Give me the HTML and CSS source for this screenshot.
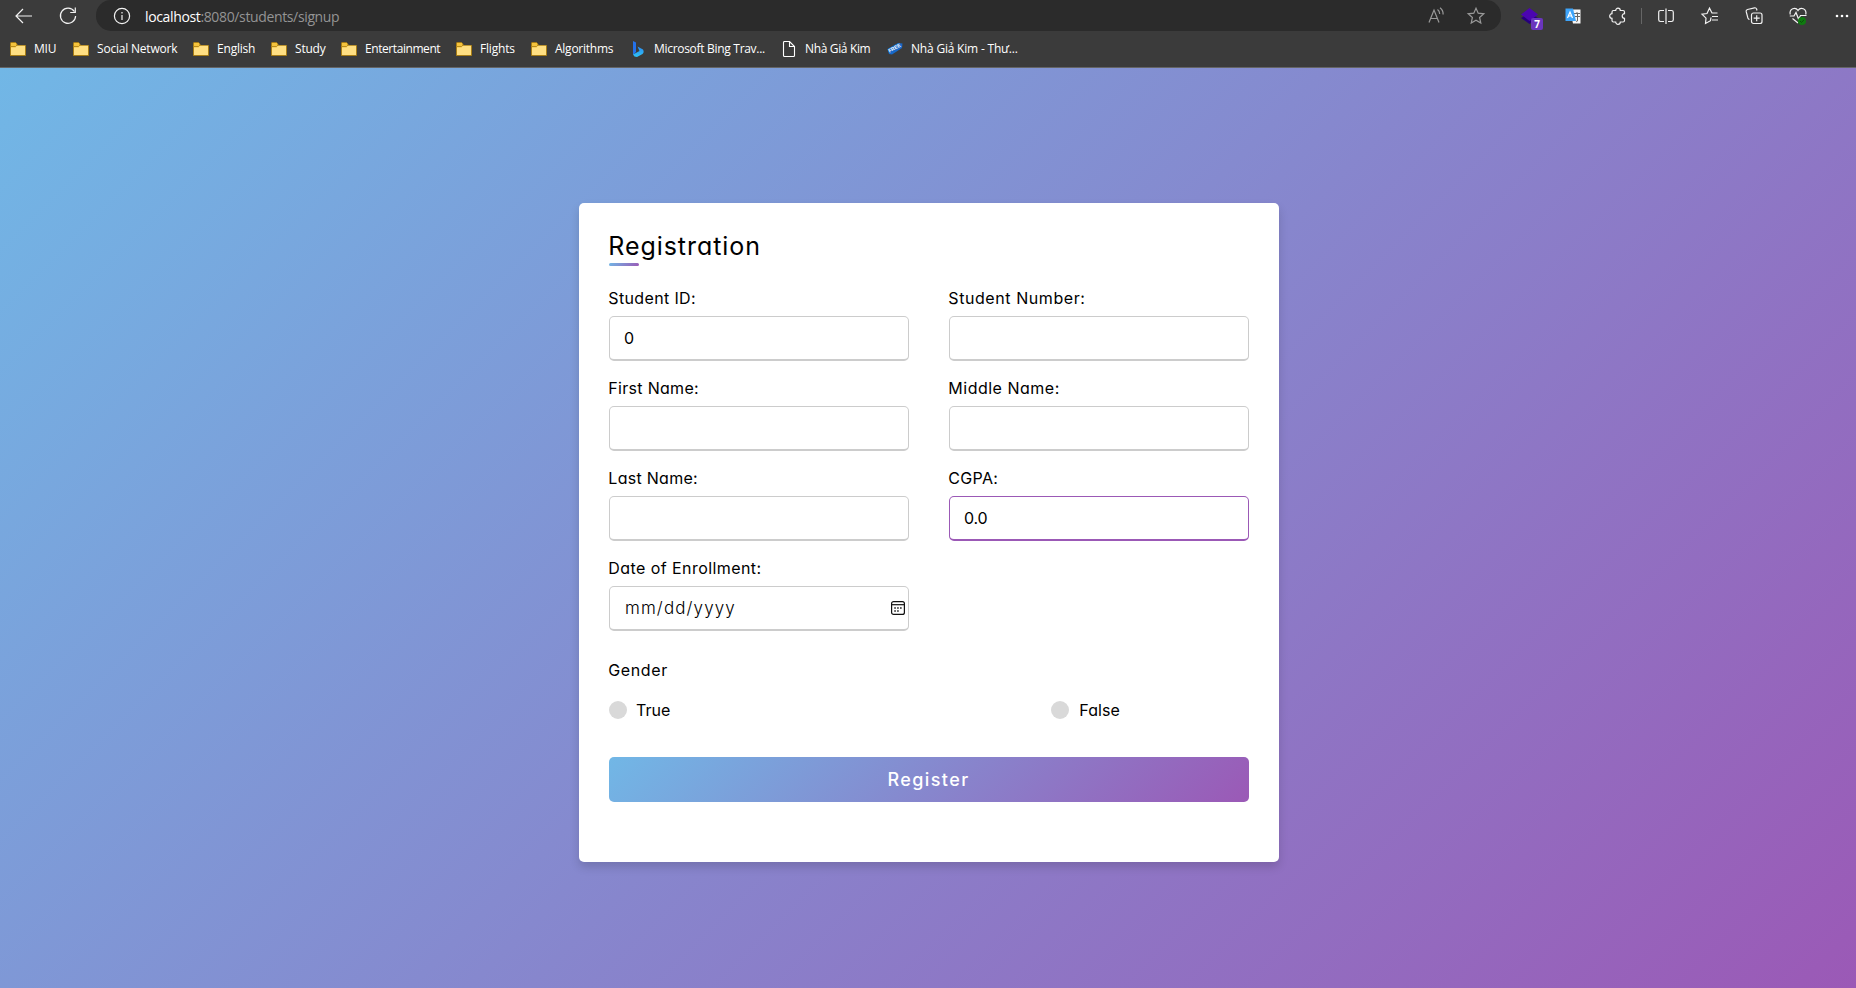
FILE: index.html
```
<!DOCTYPE html>
<html lang="en">
<head>
<meta charset="utf-8">
<title>Registration</title>
<link rel="stylesheet" href="styles.css">
</head>
<body>
<svg class="defs" width="0" height="0">
  <symbol id="folder" viewBox="0 0 16 14">
    <path d="M.5 13.500V1.200Q.5.500 1.200.500H5.500L7 2V3.500H15.500V13.500Z" fill="#f5c33c" stroke="#a77d16"/>
    <path d="M1 5.500H5.500L7 3.800H15V13H1Z" fill="#ffdf82"/>
    <path d="M.5 4.500H5.500L7 3" fill="none" stroke="#b88b1c"/>
  </symbol>
</svg>
<header class="browser">
  <div class="toolbar">
    <svg class="icon back" viewBox="0 0 18 16"><path d="M17 8H1.500M8 1 1 8l7 7"/></svg>
    <svg class="icon reload" viewBox="0 0 18 18"><path d="M15.300 4.500A7.600 7.600 0 1 0 16.600 9M16.300.500V5.500H11.200"/></svg>
    <div class="address">
      <svg class="icon info" viewBox="0 0 18 18"><circle cx="9" cy="9" r="7.600"/><path d="M9 8v5M9 5v1.500"/></svg>
      <span class="url"><b>localhost</b>:8080/students/signup</span>
      <svg class="icon read" viewBox="0 0 18 18"><path d="M1 15.500 6 3l5 12.500M2.800 11.500H9.200M9.500 2.500q2.200 1.500 2.200 4.500M12 .800q3.300 2.400 3.100 6.700"/></svg>
      <svg class="icon fav" viewBox="0 0 18 18"><path d="M9 1.300 11.200 6.200 16.800 6.800 12.600 10.500 13.800 16 9 13.200 4.200 16 5.400 10.500 1.200 6.800 6.800 6.200Z"/></svg>
    </div>
    <div class="extension">
      <svg viewBox="0 0 17 16"><path d="M0 10 8.500 5 17 10 8.500 16Z" fill="#26007c"/><path d="M0 6.500 8.500 0 17 6.500 8.500 13Z" fill="#4b05b0"/></svg>
      <span class="badge">7</span>
    </div>
    <svg class="translate" viewBox="0 0 16 16"><path d="M5 1.500H15.500V15.500H8Z" fill="#f6f6f6"/><path d="M9 5.500H15M12 4V6M10 8.500H15M12.500 6V13Q12 14 11 13" stroke="#666" fill="none"/><path d="M.5.500H8L11 13H.5Z" fill="#3da4fa"/><path d="M2.500 10 5 4 7.500 10M3.500 8H6.500" stroke="#fff" fill="none" stroke-width="1.200"/></svg>
    <svg class="icon puzzle" viewBox="0 0 18 18"><path d="M4.500 3.500H6.700A2.300 2.300 0 0 1 11.300 3.500H14Q15.500 3.500 15.500 5V6.700A2.300 2.300 0 0 0 15.500 11.300V13.500Q15.500 15 14 15H11.300A2.300 2.300 0 0 1 6.700 15H4.500Q3 15 3 13.500V11.300A2.300 2.300 0 0 1 3 6.700V5Q3 3.500 4.500 3.500Z"/></svg>
    <i class="divider"></i>
    <svg class="icon split" viewBox="0 0 16 16"><path d="M6 2.500H2.500Q.7 2.500.7 4.200V11.800Q.7 13.500 2.500 13.500H6M10 2.500h3.500q1.800 0 1.800 1.700v7.600q0 1.700-1.800 1.700H10M8 .500v15.500"/></svg>
    <svg class="icon favs" viewBox="0 0 18 18"><path d="M10 10.500 9.500 13.700 4.500 16.500 5 11.200 1 7.200 6 6.500 8.500 1.200 11 6H16.500M11 9.500H17M11 13H17"/></svg>
    <svg class="icon coll" viewBox="0 0 18 18"><rect x="6.500" y="6" width="10.500" height="10.500" rx="2"/><path d="M11.700 8.200v6M8.700 11.200h6M4.500 12.500Q3.300 12.300 2.900 11L1.200 4.700Q.800 3 2.500 2.500L9.500.800Q11 .500 11.600 2L12 3.500"/></svg>
    <div class="health">
      <svg class="icon" viewBox="0 0 18 18"><path d="M1.200 7.500C0 1.500 6.500-.500 9 3.500 11.500-.500 18 1.500 16.800 7.500M.800 9H5L7 5.500 9.500 12 11.500 8.500H17.500M3.500 11.500 9 16"/></svg>
      <svg class="ok" viewBox="0 0 8 8"><circle cx="4" cy="4" r="4" fill="#0f7b10"/><path d="M2 4 3.500 5.500 6 2.800" fill="none" stroke="#0a4f0b"/></svg>
    </div>
    <svg class="more" viewBox="0 0 14 4"><circle cx="2" cy="2" r="1.300"/><circle cx="7" cy="2" r="1.300"/><circle cx="12" cy="2" r="1.300"/></svg>
  </div>
  <nav class="bookmarks">
    <a class="bm b1"><svg class="folder"><use href="#folder"/></svg><span>MIU</span></a>
    <a class="bm b2"><svg class="folder"><use href="#folder"/></svg><span>Social Network</span></a>
    <a class="bm b3"><svg class="folder"><use href="#folder"/></svg><span>English</span></a>
    <a class="bm b4"><svg class="folder"><use href="#folder"/></svg><span>Study</span></a>
    <a class="bm b5"><svg class="folder"><use href="#folder"/></svg><span>Entertainment</span></a>
    <a class="bm b6"><svg class="folder"><use href="#folder"/></svg><span>Flights</span></a>
    <a class="bm b7"><svg class="folder"><use href="#folder"/></svg><span>Algorithms</span></a>
    <a class="bm b8"><svg class="page" viewBox="0 0 16 16"><defs><linearGradient id="bing" x1="0" y1="0" x2="0" y2="1"><stop offset="0" stop-color="#2a8bf2"/><stop offset="1" stop-color="#2fc3f5"/></linearGradient></defs><path d="M3 0 6 1.500V11L3 14Z" fill="#2471ea"/><path d="M7.500 5.500 13 8.500Q14.500 11 12.500 13L7 16Q4 16 3 13.500L9.500 10Z" fill="url(#bing)"/></svg><span>Microsoft Bing Trav...</span></a>
    <a class="bm b9"><svg class="page" viewBox="0 0 16 16"><path d="M2.500 1.500Q2.500.500 3.500.500H8.500L13.500 5.500V14.500Q13.500 15.500 12.500 15.500H3.500Q2.500 15.500 2.500 14.500ZM8.500.500V5.500H13.500" fill="none" stroke="#fff" stroke-width="1.100"/></svg><span>Nhà Giả Kim</span></a>
    <a class="bm b10"><svg class="page" viewBox="0 0 16 16"><path d="M.5 8 11 2 15.500 2.500 15 7 5 13.500 2 13Z" fill="#1769c8"/><text x="2.500" y="12" transform="rotate(-29 2 12)" class="tag">FREE</text></svg><span>Nhà Giả Kim - Thư...</span></a>
  </nav>
</header>
<main class="page-body">
  <section class="card">
    <h1 class="title">Registration</h1>
    <form>
      <div class="fields">
        <div class="field"><label class="s-id">Student ID:</label><div class="input">0</div></div>
        <div class="field"><label class="s-number">Student Number:</label><div class="input"></div></div>
        <div class="field"><label class="s-first">First Name:</label><div class="input"></div></div>
        <div class="field"><label class="s-middle">Middle Name:</label><div class="input"></div></div>
        <div class="field"><label class="s-last">Last Name:</label><div class="input"></div></div>
        <div class="field"><label class="s-cgpa">CGPA:</label><div class="input active">0.0</div></div>
        <div class="field"><label class="s-date">Date of Enrollment:</label><div class="input date"><span>mm/dd/yyyy</span><svg class="calendar" viewBox="0 0 14 14"><rect x=".6" y=".6" width="12.800" height="12.800" rx="2" fill="none" stroke="#111" stroke-width="1.200"/><path d="M1 3.700H13" stroke="#111" stroke-width="1.200"/><path d="M3.300 7H10.700M3.300 10H8" stroke="#111" stroke-width="1.500" stroke-dasharray="1.500 1.400"/></svg></div></div>
      </div>
      <div class="gender">Gender</div>
      <div class="options">
        <div class="option"><i class="dot"></i><span>True</span></div>
        <div class="option"><i class="dot"></i><span>False</span></div>
      </div>
      <div class="register">Register</div>
    </form>
  </section>
</main>
</body>
</html>
```
FILE: styles.css
```
* { box-sizing: border-box; }
body { margin: 0; height: 988px; display: flex; flex-direction: column; font-family: Inter, sans-serif; overflow: hidden; }
.defs { position: absolute; }
.browser { height: 68px; background: #3b3b3b; border-bottom: 1px solid #656565; font-family: "Open Sans", sans-serif; color: #fff; }
.toolbar { height: 32px; display: flex; align-items: center; }
.icon { flex: none; width: 18px; height: 18px; fill: none; stroke: #f2f2f2; stroke-width: 1.2; overflow: visible; }
.back { width: 18px; height: 16px; margin-left: 15px; }
.reload { margin-left: 26px; }
.address { width: 1405px; height: 31px; margin: 0 0 1px 19px; background: #2b2b2b; border-radius: 15px; display: flex; align-items: center; padding: 1px 16px 0 17px; }
.url { margin-left: 14px; font-size: 14px; letter-spacing: -.36px; color: #949494; flex: none; }
.url b { font-weight: 400; color: #fff; }
.read { margin-left: auto; stroke: #999; }
.fav { margin-left: 21px; stroke: #999; }
.extension { position: relative; width: 24px; height: 24px; margin-left: 19px; }
.extension svg { display: block; width: 17px; height: 16px; margin: 4px 0 0 1px; }
.badge { position: absolute; left: 11px; top: 14px; width: 12px; height: 12px; border-radius: 2px; background: #6a35bd; font: bold 10px/12px "Open Sans", sans-serif; text-align: center; }
.translate { width: 16px; height: 16px; margin-left: 21px; }
.puzzle { margin-left: 28px; }
.divider { width: 1px; height: 16px; margin-left: 14px; background: #666; }
.split { width: 16px; height: 16px; margin-left: 16px; }
.favs { margin-left: 27px; }
.coll { margin-left: 26px; }
.health { position: relative; height: 18px; margin-left: 26px; }
.ok { position: absolute; left: 9px; top: 10px; width: 8px; height: 8px; }
.more { width: 14px; height: 4px; margin-left: 28px; fill: #fff; }
.bookmarks { height: 35px; display: flex; padding-left: 10px; font-size: 12px; letter-spacing: -.2px; }
.bm { display: flex; align-items: center; height: 34px; gap: 8px; white-space: nowrap; flex: none; }
.b1 { width: 63px; }
.b2 { width: 120px; }
.b3 { width: 78px; }
.b4 { width: 70px; }
.b5 { width: 115px; letter-spacing: -.43px; }
.b6 { width: 75px; }
.b7 { width: 99px; letter-spacing: -.25px; }
.b8 { width: 151px; letter-spacing: -.3px; }
.b9 { width: 106px; letter-spacing: -.35px; }
.bm span { margin-top: -1px; }
.folder { width: 16px; height: 14px; }
.page { width: 16px; height: 16px; }
.tag { font: bold 5px "Liberation Sans", sans-serif; letter-spacing: 0; fill: #fff; }
.page-body { flex: 1; background: linear-gradient(135deg, #71b7e6, #9b59b6); display: flex; justify-content: center; align-items: flex-start; padding: 135px 0 0 2px; }
.card { width: 700px; height: 659px; padding: 25px 30px; background: #fff; border-radius: 5px; box-shadow: 0 5px 10px rgba(0,0,0,.15); font-feature-settings: "cv11"; }
.title { position: relative; margin: 0; height: 38px; font-size: 25px; line-height: 36px; font-weight: 400; letter-spacing: .95px; text-indent: -.8px; }
.title::before { content: ""; position: absolute; left: 0; bottom: 0; width: 30px; height: 3px; border-radius: 5px; background: linear-gradient(135deg, #71b7e6, #9b59b6); }
.fields { display: grid; grid-template-columns: 300px 300px; column-gap: 40px; margin-top: 20px; }
.field { height: 90px; }
.field label { display: block; height: 24px; margin-bottom: 6px; font-size: 16px; line-height: 24px; text-indent: -.7px; }
.s-id { letter-spacing: .35px; }
.s-number { letter-spacing: .57px; }
.s-first { letter-spacing: .3px; }
.s-middle { letter-spacing: .5px; }
.s-last { letter-spacing: .28px; }
.s-cgpa { letter-spacing: .3px; }
.s-date { letter-spacing: .43px; }
.input { height: 45px; border: 1px solid #ccc; border-bottom-width: 2px; border-radius: 5px; padding-left: 14px; font-size: 16px; letter-spacing: -.2px; display: flex; align-items: center; }
.active { border-color: #9b59b6; }
.date { padding-left: 15px; font-size: 17px; font-weight: 300; letter-spacing: 1.1px; }
.calendar { width: 14px; height: 14px; margin: 0 3px 0 auto; }
.gender { margin-top: 12px; line-height: 24px; letter-spacing: .6px; text-indent: -.7px; }
.options { display: flex; justify-content: space-between; width: 511px; height: 24px; margin-top: 16px; line-height: 24px; }
.option { display: flex; align-items: center; }
.option span { margin-top: -1px; }
.option + .option span { margin-left: 1px; letter-spacing: .1px; }
.dot { width: 18px; height: 18px; margin-right: 9px; border-radius: 50%; background: #d9d9d9; }
.register { height: 45px; margin-top: 35px; padding-right: 1px; border-radius: 5px; background: linear-gradient(135deg, #71b7e6, #9b59b6); color: #fff; font-size: 18px; font-weight: 500; letter-spacing: 1.4px; display: flex; justify-content: center; align-items: center; }
```
